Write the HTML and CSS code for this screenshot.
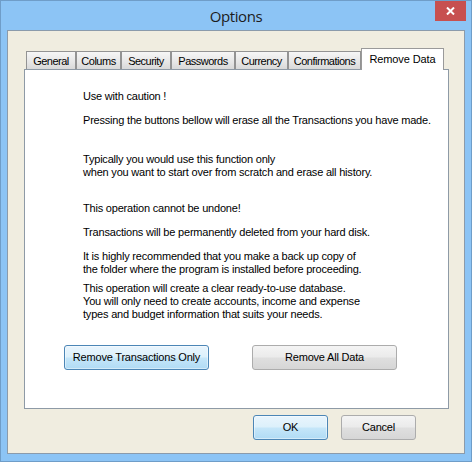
FILE: index.html
```html
<!DOCTYPE html>
<html lang="en">
<head>
<meta charset="utf-8">
<title>Options</title>
<link rel="stylesheet" href="styles.css">
</head>
<body>
<div class="window">
  <div class="titlebar">
    <div class="title">Options</div>
    <button class="close" aria-label="Close">
      <svg width="9" height="8" viewBox="0 0 9 8"><path d="M1 0.5 L8 7.5 M8 0.5 L1 7.5" stroke="#fff" stroke-width="2" fill="none"/></svg>
    </button>
  </div>
  <div class="client">
    <div class="tabs">
      <div class="tab t1">General</div>
      <div class="tab t2">Colums</div>
      <div class="tab t3">Security</div>
      <div class="tab t4">Passwords</div>
      <div class="tab t5">Currency</div>
      <div class="tab t6">Confirmations</div>
      <div class="tab selected">Remove Data</div>
    </div>
    <div class="panel">
      <p>Use with caution !</p>
      <p class="g11">Pressing the buttons bellow will erase all the Transactions you have made.</p>
      <p class="g26">Typically you would use this function only<br>when you want to start over from scratch and erase all history.</p>
      <p class="g23">This operation cannot be undone!</p>
      <p class="g11">Transactions will be permanently deleted from your hard disk.</p>
      <p class="g11">It is highly recommended that you make a back up copy of<br>the folder where the program is installed before proceeding.</p>
      <p class="g6">This operation will create a clear ready-to-use database.<br>You will only need to create accounts, income and expense<br>types and budget information that suits your needs.</p>
      <div class="actions">
        <button class="btn wide hot">Remove Transactions Only</button>
        <button class="btn wide">Remove All Data</button>
      </div>
    </div>
    <div class="footer">
      <button class="btn hot">OK</button>
      <button class="btn">Cancel</button>
    </div>
  </div>
</div>
</body>
</html>
```

FILE: styles.css
```css
* { box-sizing: border-box; }
html, body { margin: 0; padding: 0; background: #8cc4f5; }
body { font-family: "Liberation Sans", Arial, sans-serif; }

.window {
  width: 472px;
  height: 462px;
  background: #8cc4f5;
  border: 1px solid #6f9dc8;
  display: flex;
  flex-direction: column;
}

.titlebar {
  height: 29px;
  display: grid;
  grid-template-columns: 1fr auto 1fr;
  align-items: start;
}
.title {
  grid-column: 2;
  font-family: "Open Sans", "Noto Sans", sans-serif;
  font-size: 15px;
  letter-spacing: -0.4px;
  color: #1c1c1c;
  line-height: 20px;
  padding-top: 5px;
}
.close {
  grid-column: 3;
  justify-self: end;
  margin: 0 5px 0 0;
  width: 31px;
  height: 20px;
  border: 0;
  padding: 0;
  background: #c75050;
  display: flex;
  align-items: center;
  justify-content: center;
}
.close svg { display: block; }

.client {
  margin: 0 6px;
  height: 424px;
  border: 1px solid #8b9bab;
  background: #f0ede0;
  padding-top: 17px;
}

.tabs {
  display: flex;
  align-items: flex-end;
  height: 21px;
  margin-left: 18px;
  font-size: 11px;
  letter-spacing: -0.5px;
}
.tab {
  height: 18px;
  border: 1px solid #939393;
  border-bottom: 0;
  background: linear-gradient(to bottom, #f6f6f6, #e6e6e6 60%, #d9d9d9);
  text-align: center;
  line-height: 15px;
  padding-top: 2px;
  color: #000;
  white-space: nowrap;
}
.t1 { width: 50px; }
.t2 { width: 45px; }
.t3 { width: 50px; }
.t4 { width: 64px; }
.t5 { width: 53px; }
.t6 { width: 73px; }
.tab.selected {
  width: 83px;
  height: 22px;
  margin-bottom: -1px;
  background: #fff;
  border-color: #9a9a9a;
  position: relative;
  z-index: 1;
  line-height: 13px;
  padding-top: 4px;
  letter-spacing: -0.1px;
}

.panel {
  margin-left: 16px;
  width: 425px;
  height: 340px;
  border: 1px solid #8e9aa6;
  background: #fff;
  padding: 20px 0 0 58px;
  font-size: 11px;
  line-height: 13px;
  letter-spacing: -0.2px;
  color: #000;
}
.panel p { margin: 0; white-space: nowrap; }
.panel p.g6 { margin-top: 6px; }
.panel p.g11 { margin-top: 11px; }
.panel p.g23 { margin-top: 23px; }
.panel p.g26 { margin-top: 26px; }

.actions {
  display: flex;
  gap: 43px;
  margin: 24px 0 0 -19px;
}

.btn {
  width: 75px;
  height: 25px;
  padding: 0;
  border: 1px solid #acacac;
  border-radius: 3px;
  background: linear-gradient(to bottom, #f4f4f4 0%, #ebebeb 48%, #dfdfdf 52%, #d6d6d6 100%);
  font-family: "Liberation Sans", Arial, sans-serif;
  font-size: 11px;
  letter-spacing: -0.2px;
  line-height: 13px;
  color: #000;
}
.btn.wide { width: 145px; }
.btn.hot {
  border-color: #4c86b6;
  background: linear-gradient(to bottom, #e9f5fd 0%, #dcf0fb 48%, #c5e6f9 52%, #b0dbf5 100%);
  box-shadow: inset 0 0 0 1px rgba(255,255,255,0.45);
}

.footer {
  display: flex;
  justify-content: flex-end;
  gap: 13px;
  margin-top: 6px;
  padding-right: 48px;
}
```
